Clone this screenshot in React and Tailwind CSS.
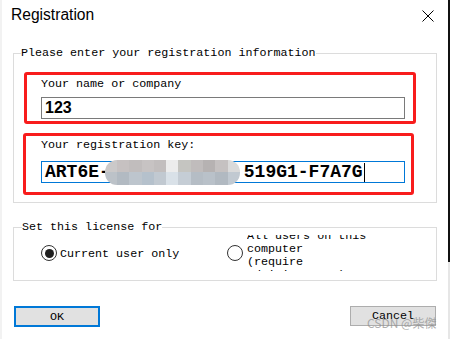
import { useState } from 'react';

const mono = "font-['Liberation_Mono',monospace]";

const mosaicTop = ['bg-[#cbc9c9]', 'bg-[#c6c1c1]', 'bg-[#c1bdbd]', 'bg-[#c7c3c3]', 'bg-[#c2bebe]', 'bg-[#ececec]', 'bg-[#c5c5c1]', 'bg-[#c0bcbc]', 'bg-[#b6b2b2]', 'bg-[#c5c1c1]', 'bg-[#dadada]'];
const mosaicBottom = ['bg-[#bcc2c8]', 'bg-[#b2bac2]', 'bg-[#bdc5cd]', 'bg-[#b5c1cc]', 'bg-[#c1c9d1]', 'bg-[#d9e1e8]', 'bg-[#c5cdd5]', 'bg-[#b5bdc5]', 'bg-[#b9c1c9]', 'bg-[#b1b9c1]', 'bg-[#c1c9d1]'];

const Mosaic = () => (
    <span className="inline-grid grid-cols-11 grid-rows-2 w-[135px] h-[25px] rounded-[12px] overflow-hidden -ml-[5px] shrink-0">
        {mosaicTop.map((c, i) => (
            <span key={'t' + i} className={c} />
        ))}
        {mosaicBottom.map((c, i) => (
            <span key={'b' + i} className={c} />
        ))}
    </span>
);

const Radio = ({ checked }) => (
    <div className="w-[16px] h-[16px] rounded-full border border-[#333333] bg-white flex items-center justify-center shrink-0">
        {checked && <div className="w-[9px] h-[9px] rounded-full bg-[#1f1f1f]" />}
    </div>
);

export default function App() {
    const [scope, setScope] = useState('current');

    return (
        <div className="w-[450px] h-[339px] bg-white flex relative overflow-hidden text-black">
            {/* left window edge */}
            <div className="w-[2px] bg-[#f2f2f2]" />

            <div className="flex-1 flex flex-col">
                {/* Title bar */}
                <div className="h-[46px] flex items-start justify-between pl-[9px] pr-[14px] pt-[6px]">
                    <span className="font-['Liberation_Sans',sans-serif] text-[15.6px] leading-[18px]">Registration</span>
                    <svg width="12" height="12" viewBox="0 0 12 12" className="mt-[4px]">
                        <path d="M0.5 0.5L11.5 11.5M11.5 0.5L0.5 11.5" stroke="#000" strokeWidth="1" />
                    </svg>
                </div>

                {/* Registration info */}
                <fieldset className="ml-[11px] w-[424px] border border-[#dcdcdc] m-0 p-0 pb-[7px]">
                    <legend className={`${mono} ml-[7px] p-0 text-[11.7px] leading-[14px]`}>
                        Please enter your registration information
                    </legend>

                    <div className="mt-[12px] ml-[10px] w-[392px] h-[52px] border-[3px] border-[#f81c1c] rounded-[3px] flex flex-col pt-[2px]">
                        <span className={`${mono} ml-[14px] text-[11.7px] leading-[14px]`}>Your name or company</span>
                        <div className="ml-[14px] mt-[6px] w-[364px] h-[22px] border border-[#7a7a7a] flex items-center pl-[3px]">
                            <span className="font-['Liberation_Sans',sans-serif] font-bold text-[16px] leading-[18px]">123</span>
                        </div>
                    </div>

                    <div className="mt-[9px] ml-[9px] w-[391px] h-[62px] border-[3px] border-[#f81c1c] rounded-[3px] flex flex-col pt-[2px]">
                        <span className={`${mono} ml-[15px] text-[11.7px] leading-[14px]`}>Your registration key:</span>
                        <div className="ml-[15px] mt-[9px] w-[364px] h-[22px] border border-[#0078d7] flex items-center pl-[3px]">
                            <span className={`${mono} font-bold text-[18px] leading-[20px]`}>ART6E-</span>
                            <Mosaic />
                            <span className={`${mono} font-bold text-[18px] leading-[20px] ml-[4px]`}>519G1-F7A7G</span>
                            <span className="w-[1px] h-[19px] bg-black ml-[1px]" />
                        </div>
                    </div>
                </fieldset>

                {/* License scope */}
                <fieldset className="mt-[17px] ml-[11px] w-[424px] border border-[#dcdcdc] m-0 p-0 pb-[9px]">
                    <legend className={`${mono} ml-[8px] p-0 text-[11.7px] leading-[14px]`}>Set this license for</legend>
                    <div className="-mt-[2px] h-[39px] flex items-start">
                        <div className="ml-[27px] w-[186px] flex items-start cursor-default" onClick={() => setScope('current')}>
                            <div className="mt-[13px]">
                                <Radio checked={scope === 'current'} />
                            </div>
                            <span className={`${mono} ml-[3px] mt-[15px] text-[11.7px] leading-[14px] whitespace-nowrap`}>Current user only</span>
                        </div>
                        <div className="flex items-start cursor-default" onClick={() => setScope('all')}>
                            <div className="mt-[13px]">
                                <Radio checked={scope === 'all'} />
                            </div>
                            <div className="ml-[4px] mt-[3px] h-[36px] overflow-hidden">
                                <div className={`${mono} -mt-[5px] text-[11.7px] leading-[13px] w-[150px]`}>
                                    <div>All users on this</div>
                                    <div>computer</div>
                                    <div>(require</div>
                                    <div>administrator)</div>
                                </div>
                            </div>
                        </div>
                    </div>
                </fieldset>

                {/* Buttons */}
                <div className="mt-[25px] flex items-start px-[12px]">
                    <button className={`${mono} w-[86px] h-[21px] border-2 border-[#0078d7] bg-[#e1e1e1] text-[11.7px] leading-[14px] flex items-center justify-center`}>
                        OK
                    </button>
                    <button className={`${mono} ml-auto w-[86px] h-[20px] border border-[#adadad] bg-[#e1e1e1] text-[11.7px] leading-[14px] flex items-center justify-center`}>
                        Cancel
                    </button>
                </div>
            </div>

            {/* right window edge */}
            <div className="w-[2px] flex flex-col">
                <div className="h-[262px] bg-[#111111]" />
                <div className="flex-1 bg-[#e6e6e6]" />
            </div>

            {/* watermark */}
            <span className="absolute left-[367px] top-[316px] font-['Noto_Sans_CJK_SC',sans-serif] text-[12px] leading-[14px] text-[#8c8c8c]/70 whitespace-nowrap">
                CSDN @柴傑
            </span>
        </div>
    );
}
